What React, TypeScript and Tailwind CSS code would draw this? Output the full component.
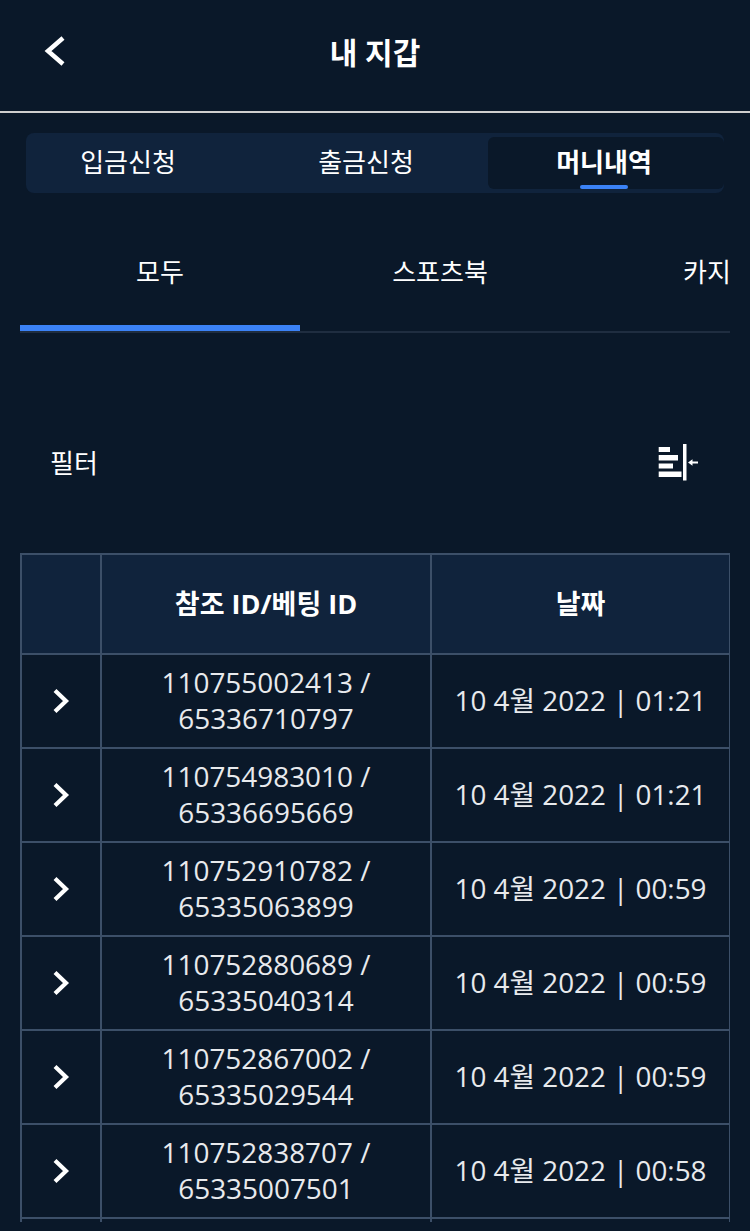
const rows = [
  { ref: "110755002413", bet: "65336710797", date: "10 4월 2022 | 01:21" },
  { ref: "110754983010", bet: "65336695669", date: "10 4월 2022 | 01:21" },
  { ref: "110752910782", bet: "65335063899", date: "10 4월 2022 | 00:59" },
  { ref: "110752880689", bet: "65335040314", date: "10 4월 2022 | 00:59" },
  { ref: "110752867002", bet: "65335029544", date: "10 4월 2022 | 00:59" },
  { ref: "110752838707", bet: "65335007501", date: "10 4월 2022 | 00:58" },
];

const FilterIcon = () => (
  <svg width="40" height="38" viewBox="0 0 40 38" fill="none">
    <rect x="0.7" y="3" width="11.3" height="5" fill="#fff" />
    <rect x="0.7" y="11" width="19.3" height="5.5" fill="#fff" />
    <rect x="0.7" y="19.5" width="14.3" height="5" fill="#fff" />
    <rect x="0.7" y="27.5" width="22.8" height="5.5" fill="#fff" />
    <rect x="25" y="-0.5" width="3.5" height="37" fill="#fff" />
    <path d="M30 18.5l4.5-3.2v2.2H40v2h-5.5v2.2z" fill="#fff" />
  </svg>
);

const BackIcon = () => (
  <svg className="absolute left-[44px] top-[35px]" width="22" height="32" viewBox="0 0 22 32" fill="none">
    <path d="M19 3L4 16l15 13" stroke="#fff" strokeWidth="4.5" />
  </svg>
);

const RowIcon = () => (
  <svg className="mx-auto" width="18" height="26" viewBox="0 0 18 26" fill="none">
    <path d="M3 2.5l11 10.5L3 23.5" stroke="#fff" strokeWidth="4.2" />
  </svg>
);

const App = () => {
  return (
    <div className="w-[750px] h-[1231px] overflow-hidden bg-[#0a1829] text-white font-['Open_Sans','Noto_Sans_CJK_KR',sans-serif]">
      <header className="h-[113px] border-b-2 border-[#cfcfcf] flex items-center justify-center relative">
        <BackIcon />
        <h1 className="text-[30px] font-bold mb-[7px]">내 지갑</h1>
      </header>

      <div className="mx-[26px] mt-[20px] h-[60px] rounded-lg bg-[#10233c] flex pt-[4px] pb-[4px]">
        <div className="w-[222px] shrink-0 pr-[18px] flex items-center justify-center text-[26px] pb-[2px]">입금신청</div>
        <div className="w-[240px] shrink-0 pr-[4px] flex items-center justify-center text-[26px] pb-[2px]">출금신청</div>
        <div className="w-[236px] shrink-0 pr-[4px] rounded-md bg-[#0a1829] flex items-center justify-center text-[26px] font-bold pb-[2px] relative">
          머니내역
          <span className="absolute bottom-0 left-[92px] w-[48px] h-[4px] rounded-sm bg-[#3b82f6]" />
        </div>
      </div>

      <div className="mx-[20px] mt-[32px] h-[108px] border-b-2 border-[#1f2d40] flex overflow-hidden">
        <div className="w-[280px] h-[106px] shrink-0 border-b-[6px] border-[#3b82f6] flex items-center justify-center text-[26px] pb-[6px]">모두</div>
        <div className="w-[280px] shrink-0 flex items-center justify-center text-[26px] pb-[12px]">스포츠북</div>
        <div className="w-[280px] shrink-0 pr-[2px] flex items-center justify-center text-[26px] pb-[12px] whitespace-nowrap">카지노</div>
      </div>

      <div className="mt-[100px] pl-[50px] pr-[52px] h-[60px] flex items-center justify-between">
        <span className="text-[26px]">필터</span>
        <FilterIcon />
      </div>

      <div className="ml-[20px] w-[710px] mt-[60px] h-[669px] overflow-hidden">
        <table className="w-[709px] table-fixed border-collapse border-2 border-[#3c4f68]">
          <thead>
            <tr className="h-[100px] bg-[#10233c]">
              <th className="w-[80px] border-2 border-[#3c4f68]" />
              <th className="w-[330px] border-2 border-[#3c4f68] text-[27px] font-bold">참조 ID/베팅 ID</th>
              <th className="w-[299px] border-2 border-[#3c4f68] text-[27px] font-bold">날짜</th>
            </tr>
          </thead>
          <tbody>
            {rows.map((row) => (
              <tr key={row.ref} className="h-[94px]">
                <td className="border-2 border-[#3c4f68]">
                  <RowIcon />
                </td>
                <td className="border-2 border-[#3c4f68] text-center text-[27.9px] leading-[36px] pb-[2px] text-[#e8eaed]">
                  {row.ref} /<br />
                  {row.bet}
                </td>
                <td className="border-2 border-[#3c4f68] text-center text-[27.8px] text-[#e8eaed] whitespace-nowrap">{row.date}</td>
              </tr>
            ))}
            <tr className="h-[40px]">
              <td className="border-2 border-[#3c4f68]" />
              <td className="border-2 border-[#3c4f68]" />
              <td className="border-2 border-[#3c4f68]" />
            </tr>
          </tbody>
        </table>
      </div>
    </div>
  );
};

export default App;
